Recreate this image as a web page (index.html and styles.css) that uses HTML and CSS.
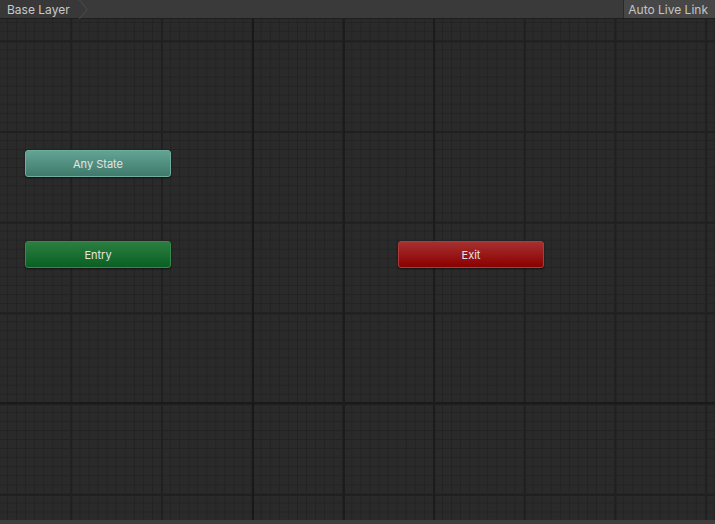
FILE: index.html
```html
<!DOCTYPE html>
<html>
<head>
<meta charset="utf-8">
<link rel="stylesheet" href="styles.css">
</head>
<body>
<div class="window">
  <div class="toolbar">
    <div class="crumb">
      <span class="crumb-label">Base Layer</span>
      <svg class="crumb-arrow" width="10" height="19" viewBox="0 0 10 19"><path d="M0 -0.5 L8 9.5 L0 19.5" fill="#383838" stroke="#4e4e4e" stroke-width="1"/></svg>
    </div>
    <div class="spacer"></div>
    <div class="live-link">Auto Live Link</div>
  </div>
  <div class="canvas">
    <div class="node node-any">Any State</div>
    <div class="node node-entry">Entry</div>
    <div class="node node-exit">Exit</div>
  </div>
  <div class="statusbar"></div>
</div>
</body>
</html>
```
FILE: styles.css
```css
html, body {
  margin: 0;
  padding: 0;
  width: 715px;
  height: 524px;
  overflow: hidden;
  background: #282828;
  font-family: Inter, "Noto Sans", "DejaVu Sans", sans-serif;
}
.window {
  display: flex;
  flex-direction: column;
  width: 715px;
  height: 524px;
}
.toolbar {
  display: flex;
  align-items: stretch;
  height: 18px;
  background: #3a3a3a;
  border-bottom: 1px solid #1e1e1e;
  flex: none;
}
.crumb {
  display: flex;
  align-items: stretch;
}
.crumb-label {
  display: flex;
  align-items: center;
  padding-left: 7px;
  padding-right: 9px;
  font-size: 12px;
  color: #c8c8c8;
  background: #383838;
}
.crumb-arrow {
  display: block;
}
.spacer {
  flex: 1;
}
.live-link {
  display: flex;
  align-items: center;
  padding: 0 7px 0 4px;
  font-size: 12px;
  color: #c4c4c4;
  background: #474747;
  border-left: 1px solid #2a2a2a;
}
.canvas {
  position: relative;
  flex: 1;
  background-color: #2a2a2a;
  background-image:
    linear-gradient(to right, transparent 232px, #191919 232px, #191919 234px, transparent 234px,
      transparent 323px, #1c1c1c 323px, #1c1c1c 325px, transparent 325px,
      transparent 413px, #1c1c1c 413px, #1c1c1c 415px, transparent 415px),
    linear-gradient(to bottom, transparent 383px, #1a1a1a 383px, #1a1a1a 385px, transparent 385px),
    linear-gradient(to right, #202020 0, #202020 1.5px, transparent 1.5px),
    linear-gradient(to bottom, #202020 0, #202020 1.5px, transparent 1.5px),
    linear-gradient(to right, #232323 0, #232323 1px, transparent 1px),
    linear-gradient(to bottom, #232323 0, #232323 1px, transparent 1px);
  background-size:
    100% 100%,
    100% 100%,
    90.72px 100%,
    100% 90.72px,
    9.072px 100%,
    100% 9.072px;
  background-position:
    20px 0,
    0 0,
    70.3px 0,
    0 21.4px,
    7.0px 0,
    0 3.2px;
  background-repeat: no-repeat, no-repeat, repeat, repeat, repeat, repeat;
}
.statusbar {
  height: 4px;
  background: #3e3e3e;
  flex: none;
}
.node {
  position: absolute;
  width: 144px;
  height: 25px;
  border-radius: 3px;
  display: flex;
  align-items: center;
  justify-content: center;
  font-size: 11px;
  color: #e4e4e4;
  box-shadow: 0 1px 2px rgba(0,0,0,0.6);
}
.node-any {
  left: 25px;
  top: 131px;
  background: linear-gradient(to bottom, #62a493, #3f7a6c);
  border: 1px solid #6fae9e;
}
.node-entry {
  left: 25px;
  top: 222px;
  background: linear-gradient(to bottom, #2a7f40, #0a5f23);
  border: 1px solid #368a4c;
}
.node-exit {
  left: 398px;
  top: 222px;
  background: linear-gradient(to bottom, #a63030, #8b0000);
  border: 1px solid #b03a3a;
}
```
